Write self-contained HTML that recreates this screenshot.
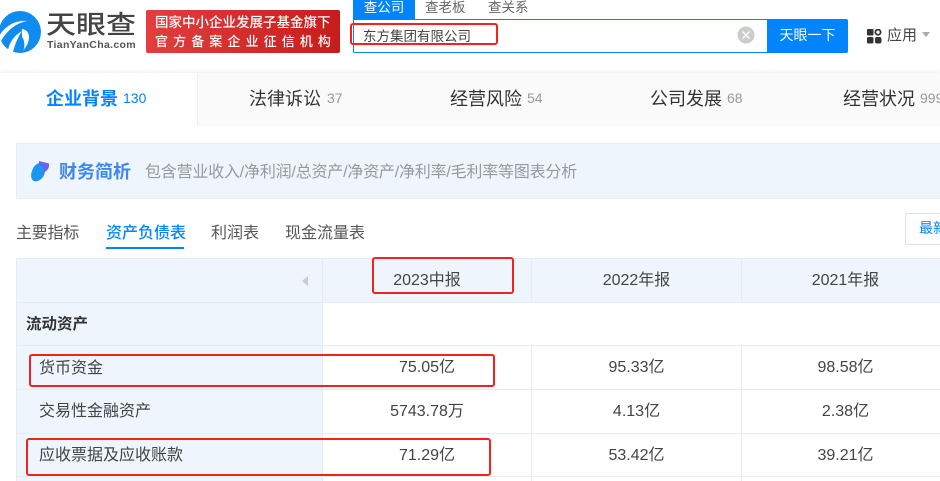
<!DOCTYPE html>
<html lang="zh"><head><meta charset="utf-8"><title>天眼查</title>
<style>
html,body{margin:0;padding:0;width:940px;height:481px;overflow:hidden;background:#fff}
body{position:relative;font-family:"Liberation Sans","Noto Sans CJK SC",sans-serif;color:#333}
.a{position:absolute;white-space:nowrap}
.c{text-align:center}
.f16{font-size:16px;line-height:22px;color:#444}
.red{position:absolute;border:2px solid #f5211a;border-radius:3px;box-sizing:border-box;z-index:5}
.nav{font-size:18px;line-height:26px;color:#333;top:86px}
.num{font-size:14px;line-height:26px;color:#999;top:85px}
.line{position:absolute;background:#e4edf6}
</style></head><body>
<svg class="a" style="left:-2px;top:10px" width="44" height="44" viewBox="0 0 44 44">
<circle cx="22" cy="22" r="21" fill="#0f8cf0"/>
<path d="M1 26C8 15 18 10 29 11C19 13 10 19 3 31Z" fill="#fff"/>
<path d="M10 40C12 31 17 25 24 21C20 27 17 34 15 42Z" fill="#fff"/>
<path d="M24 19C31 20 33 27 29 35L25 41C27 38 27 30 24 27C24 24 24 22 24 19Z" fill="#fff"/>
<path d="M32 37C37 36 40 33 42 28L43 30C41 35 37 40 31 42Z" fill="#fff" opacity=".0"/>
</svg>
<div class="a" style="left:46px;top:10px;font-size:30px;line-height:32px;color:#444;font-weight:500;transform:scaleY(.86)">天眼查</div>
<div class="a" style="left:47px;top:39px;font-size:10.5px;line-height:12px;font-weight:bold;color:#555;letter-spacing:.32px">TianYanCha.com</div>
<div class="a" style="left:146px;top:10px;width:194px;height:43px;border-radius:2px;background:linear-gradient(90deg,#e23e40,#c71c1c)"></div>
<div class="a" style="left:155px;top:14px;font-size:13.5px;line-height:18px;color:#fff;font-weight:500">国家中小企业发展子基金旗下</div>
<div class="a" style="left:155px;top:33px;font-size:13px;line-height:18px;color:#fff;letter-spacing:5.1px;font-weight:500">官方备案企业征信机构</div>
<div class="a c" style="left:353px;top:0;width:62px;height:19px;background:#0084ff;color:#fff;font-size:13.5px;line-height:16px">查公司</div>
<div class="a" style="left:425px;top:0;font-size:13.5px;line-height:16px;color:#666">查老板</div>
<div class="a" style="left:488px;top:0;font-size:13.5px;line-height:16px;color:#666">查关系</div>
<div class="a" style="left:353px;top:19px;width:414px;height:34px;border:1px solid #0084ff;border-right:0;box-sizing:border-box;border-radius:0 0 0 2px"></div>
<div class="a" style="left:363px;top:27px;font-size:13.5px;line-height:19px;color:#444">东方集团有限公司</div>
<div class="red" style="left:350px;top:23px;width:148px;height:22px"></div>
<svg class="a" style="left:737px;top:26px" width="18" height="18"><circle cx="9" cy="9" r="8.5" fill="#ccc"/><path d="M5.5 5.5L12.5 12.5M12.5 5.5L5.5 12.5" stroke="#fff" stroke-width="1.4"/></svg>
<div class="a c" style="left:767px;top:19px;width:81px;height:34px;background:#0084ff;border-radius:0 2px 2px 0;color:#fff;font-size:14px;line-height:33px">天眼一下</div>
<svg class="a" style="left:867px;top:29px" width="15" height="15"><rect x="0" y="0" width="6.5" height="6.5" rx="1" fill="#333"/><circle cx="11" cy="3.2" r="2.6" fill="none" stroke="#333" stroke-width="1.8"/><rect x="0" y="8" width="6.5" height="6.5" rx="1.5" fill="#333"/><rect x="8" y="8" width="6.5" height="6.5" rx="2" fill="#333"/></svg>
<div class="a" style="left:887px;top:25px;font-size:15px;line-height:22px;color:#444">应用</div>
<div class="a" style="left:922px;top:32px;width:0;height:0;border-left:4.5px solid transparent;border-right:4.5px solid transparent;border-top:5.5px solid #aaa"></div>

<div class="a" style="left:0;top:73px;width:940px;height:53px;background:#fafafa;box-shadow:0 -2px 4px rgba(0,0,0,.06)"></div>
<div class="a" style="left:0;top:73px;width:197px;height:53px;background:#fff;border-right:1px solid #f0f0f0"></div>
<div class="a nav" style="left:46px;color:#0084ff;font-weight:bold">企业背景</div><div class="a num" style="left:123px;color:#0084ff">130</div>
<div class="a nav" style="left:249px">法律诉讼</div><div class="a num" style="left:327px">37</div>
<div class="a nav" style="left:450px">经营风险</div><div class="a num" style="left:527px">54</div>
<div class="a nav" style="left:650px">公司发展</div><div class="a num" style="left:727px">68</div>
<div class="a nav" style="left:843px">经营状况</div><div class="a num" style="left:920px">999+</div>

<div class="a" style="left:16px;top:143px;width:930px;height:56px;background:#eef5fd;border:1px solid #e4edf8;box-sizing:border-box"></div>
<svg class="a" style="left:30px;top:160px" width="20" height="22" viewBox="0 0 20 22"><path d="M10 3C15 5 16 10 14 15C12 20 6 23 3 20.500C0 18 1 12 3 8.500C4 6 7 3 10 3Z" fill="#1c96f3"/><path d="M9 1L19 3.500C19.500 8 17.500 11 13.500 12.500C14 8 12 5 9 4Z" fill="#6b63ee"/></svg>
<div class="a" style="left:59px;top:159px;font-size:18px;line-height:26px;font-weight:bold;color:#3f86f2">财务简析</div>
<div class="a" style="left:145px;top:161px;font-size:16px;line-height:24px;color:#999;letter-spacing:-.2px">包含营业收入/净利润/总资产/净资产/净利率/毛利率等图表分析</div>

<div class="a" style="left:16px;top:223px;font-size:16px;line-height:22px;color:#555;letter-spacing:-.25px">主要指标</div>
<div class="a" style="left:106px;top:223px;font-size:16px;line-height:22px;color:#0084ff;font-weight:500">资产负债表</div>
<div class="a" style="left:106px;top:247px;width:78px;height:2px;background:#0084ff"></div>
<div class="a" style="left:211px;top:223px;font-size:16px;line-height:22px;color:#555">利润表</div>
<div class="a" style="left:285px;top:223px;font-size:16px;line-height:22px;color:#555">现金流量表</div>
<div class="a" style="left:905px;top:213px;width:60px;height:32px;border:1px solid #e0e0e0;border-radius:2px;box-sizing:border-box"></div>
<div class="a" style="left:919px;top:218px;font-size:14px;line-height:20px;color:#0084ff">最新</div>

<div class="a" style="left:16px;top:258px;width:307px;height:223px;background:#eef5fd"></div>
<div class="a" style="left:323px;top:258px;width:617px;height:44px;background:#eef5fd"></div>
<div class="line" style="left:16px;top:258px;width:924px;height:1px"></div>
<div class="line" style="left:16px;top:302px;width:924px;height:1px"></div>
<div class="line" style="left:16px;top:345px;width:924px;height:1px"></div>
<div class="line" style="left:16px;top:389px;width:924px;height:1px"></div>
<div class="line" style="left:16px;top:433px;width:924px;height:1px"></div>
<div class="line" style="left:16px;top:476px;width:924px;height:1px"></div>
<div class="line" style="left:16px;top:258px;width:1px;height:223px"></div>
<div class="line" style="left:322px;top:258px;width:1px;height:223px"></div>
<div class="line" style="left:531px;top:258px;width:1px;height:44px"></div>
<div class="line" style="left:531px;top:345px;width:1px;height:136px"></div>
<div class="line" style="left:741px;top:258px;width:1px;height:44px"></div>
<div class="line" style="left:741px;top:345px;width:1px;height:136px"></div>
<div class="a" style="left:302px;top:276px;width:0;height:0;border-top:5px solid transparent;border-bottom:5px solid transparent;border-right:6px solid #ccc"></div>

<div class="a c f16" style="left:323px;width:208px;top:270px">2023中报</div>
<div class="a c f16" style="left:532px;width:209px;top:270px">2022年报</div>
<div class="a c f16" style="left:742px;width:207px;top:270px">2021年报</div>
<div class="a" style="left:26px;top:314px;font-size:15.5px;line-height:22px;font-weight:bold;color:#333">流动资产</div>
<div class="a f16" style="left:39px;top:358px">货币资金</div>
<div class="a c f16" style="left:323px;width:208px;top:357px">75.05亿</div>
<div class="a c f16" style="left:532px;width:209px;top:357px">95.33亿</div>
<div class="a c f16" style="left:742px;width:207px;top:357px">98.58亿</div>
<div class="a f16" style="left:39px;top:401px">交易性金融资产</div>
<div class="a c f16" style="left:323px;width:208px;top:401px">5743.78万</div>
<div class="a c f16" style="left:532px;width:209px;top:401px">4.13亿</div>
<div class="a c f16" style="left:742px;width:207px;top:401px">2.38亿</div>
<div class="a f16" style="left:39px;top:445px">应收票据及应收账款</div>
<div class="a c f16" style="left:323px;width:208px;top:445px">71.29亿</div>
<div class="a c f16" style="left:532px;width:209px;top:445px">53.42亿</div>
<div class="a c f16" style="left:742px;width:207px;top:445px">39.21亿</div>

<div class="red" style="left:372px;top:257px;width:142px;height:37px"></div>
<div class="red" style="left:29px;top:354px;width:466px;height:33px"></div>
<div class="red" style="left:26px;top:438px;width:465px;height:38px"></div>
</body></html>
